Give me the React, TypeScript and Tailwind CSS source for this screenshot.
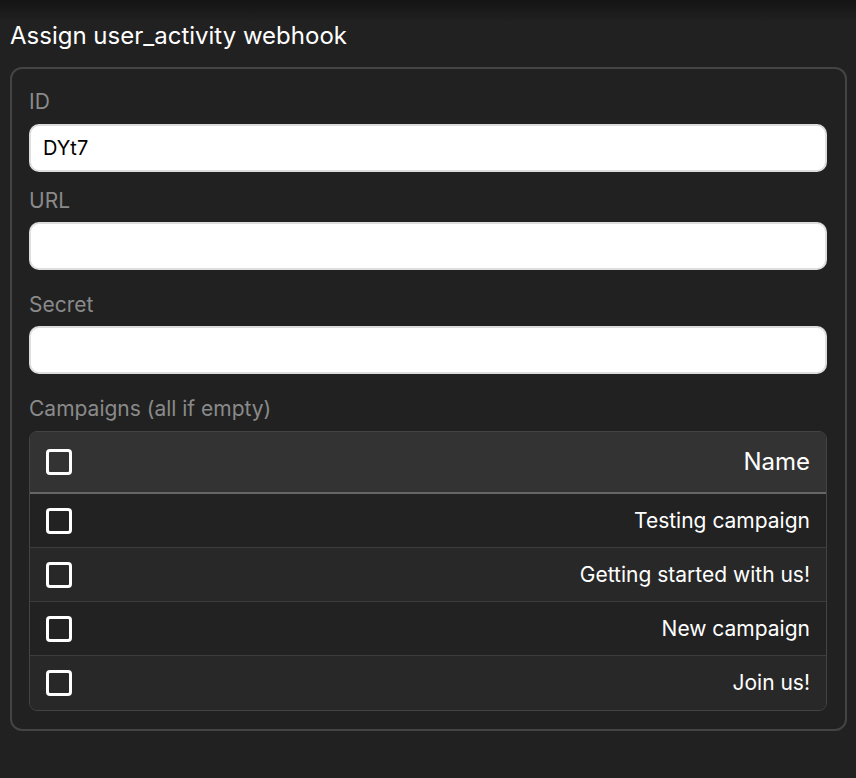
import React from "react";

const campaigns = [
  "Testing campaign",
  "Getting started with us!",
  "New campaign",
  "Join us!",
];

const Checkbox = () => (
  <span className="block w-[26px] h-[26px] rounded-[4px] border-[3px] border-white" />
);

const App = () => {
  const [id, setId] = React.useState("DYt7");
  const [url, setUrl] = React.useState("");
  const [secret, setSecret] = React.useState("");

  return (
    <div
      className="relative h-[778px] w-full overflow-hidden bg-[#212121] text-white"
      style={{ fontFamily: "Inter, 'Noto Sans', sans-serif" }}
    >
      {/* shadow from the header above */}
      <div className="absolute inset-x-0 top-0 h-[22px] bg-gradient-to-b from-[#141414] to-[#212121]" />

      <div className="relative pt-[21px] pl-[10px] pr-[9px]">
        <h1 className="text-[24px] leading-[30px] font-normal">
          Assign user_activity webhook
        </h1>

        <div className="mt-[16px] rounded-[12px] border-2 border-[#444444] pl-[17px] pr-[18px] pt-[20px] pb-[18px]">
          <label className="block text-[21px] leading-[26px] text-[#8a8a8a]">ID</label>
          <input
            className="mt-[9px] block w-full h-[48px] rounded-[10px] border-2 border-[#dddddd] bg-white px-[12px] text-[20px] text-black outline-none"
            value={id}
            onChange={(e) => setId(e.target.value)}
          />

          <label className="mt-[16px] block text-[21px] leading-[26px] text-[#8a8a8a]">URL</label>
          <input
            className="mt-[8px] block w-full h-[48px] rounded-[10px] border-2 border-[#dddddd] bg-white px-[12px] text-[20px] text-black outline-none"
            value={url}
            onChange={(e) => setUrl(e.target.value)}
          />

          <label className="mt-[22px] block text-[21px] leading-[26px] text-[#8a8a8a]">Secret</label>
          <input
            className="mt-[8px] block w-full h-[48px] rounded-[10px] border-2 border-[#dddddd] bg-white px-[12px] text-[20px] text-black outline-none"
            value={secret}
            onChange={(e) => setSecret(e.target.value)}
          />

          <label className="mt-[22px] block text-[21px] leading-[26px] text-[#8a8a8a]">
            Campaigns (all if empty)
          </label>

          <div className="mt-[9px] overflow-hidden rounded-[8px] border border-[#444444]">
            <div className="flex h-[62px] items-center justify-between border-b-2 border-[#666666] bg-[#333333] px-[16px]">
              <Checkbox />
              <span className="text-[24px]">Name</span>
            </div>
            {campaigns.map((name, i) => (
              <div
                key={name}
                className={
                  "flex h-[54px] items-center justify-between px-[16px] " +
                  (i % 2 === 0 ? "bg-[#222222]" : "bg-[#282828]") +
                  (i < campaigns.length - 1 ? " border-b border-[#3c3c3c]" : "")
                }
              >
                <Checkbox />
                <span className="text-[21px]">{name}</span>
              </div>
            ))}
          </div>
        </div>
      </div>
    </div>
  );
};

export default App;
